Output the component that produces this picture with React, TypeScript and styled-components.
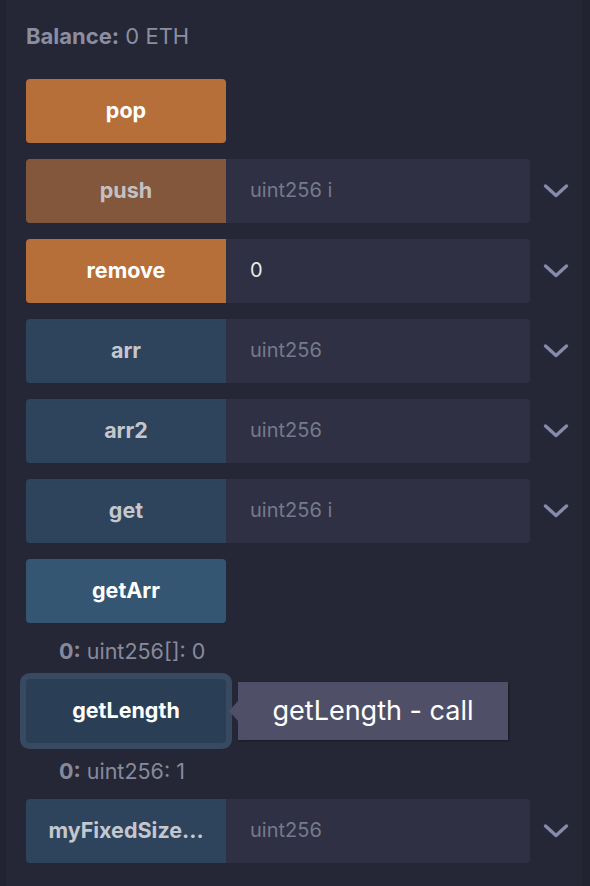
import React from "react";
import styled, { createGlobalStyle } from "styled-components";

const Global = createGlobalStyle`
  html, body { margin: 0; padding: 0; background: #252736; }
  body { font-family: "Inter", "Noto Sans", "Liberation Sans", sans-serif; }
  * { box-sizing: border-box; }
`;

const Shell = styled.div`
  display: flex;
  width: 590px;
  height: 886px;
  overflow: hidden;
  background: #252736;
`;

const SideStrip = styled.div<{ $w: number }>`
  width: ${(p) => p.$w}px;
  flex-shrink: 0;
  background: #212331;
`;

const Panel = styled.div`
  flex: 1;
  padding: 20px 0 0 20px;
  display: flex;
  flex-direction: column;
`;

const Balance = styled.div`
  font-size: 22px;
  color: #8b8ea0;
  height: 32px;
  line-height: 32px;
  margin-bottom: 27px;
  b { font-weight: 700; }
`;

const Row = styled.div`
  position: relative;
  display: flex;
  align-items: center;
  height: 64px;
  margin-bottom: 16px;
`;

const FnButton = styled.div<{ $bg: string; $color: string; $focus?: boolean; $alone?: boolean }>`
  width: 200px;
  height: 64px;
  flex-shrink: 0;
  display: flex;
  align-items: center;
  justify-content: center;
  background: ${(p) => p.$bg};
  color: ${(p) => p.$color};
  font-weight: 700;
  font-size: 21.5px;
  padding-bottom: 2px;
  border-radius: ${(p) => (p.$alone ? "4px" : "4px 0 0 4px")};
  box-shadow: ${(p) => (p.$focus ? "0 0 0 6px #384a62" : "none")};
  white-space: nowrap;
  overflow: hidden;
`;

const Input = styled.div<{ $filled?: boolean }>`
  width: 304px;
  height: 64px;
  background: #2f3043;
  border-radius: 0 4px 4px 0;
  display: flex;
  align-items: center;
  padding-left: 24px;
  padding-bottom: 2px;
  font-size: 20px;
  color: ${(p) => (p.$filled ? "#e8e9ee" : "#767a8c")};
`;

const Chevron = styled.div`
  width: 52px;
  display: flex;
  justify-content: center;
  align-items: center;
`;

const Output = styled.div`
  font-size: 21.5px;
  color: #878a9c;
  padding-left: 33px;
  margin-top: -16px;
  height: 56px;
  padding-top: 11px;
  line-height: 34px;
  b { font-weight: 700; }
`;

const Tooltip = styled.div`
  position: absolute;
  left: 212px;
  top: 3px;
  width: 270px;
  height: 58px;
  background: #4f5068;
  color: #ffffff;
  font-family: "Inter", "Liberation Sans", sans-serif;
  font-size: 27px;
  padding-bottom: 2px;
  display: flex;
  align-items: center;
  justify-content: center;
  box-shadow: 1px 1px 2px rgba(0, 0, 0, 0.35);
  &::before {
    content: "";
    position: absolute;
    left: -9px;
    top: 50%;
    margin-top: -10px;
    border-style: solid;
    border-width: 10px 9px 10px 0;
    border-color: transparent #4f5068 transparent transparent;
  }
`;

const ChevronIcon = () => (
  <svg width="26" height="16" viewBox="0 0 26 16">
    <path d="M2.5 3 L13 12.5 L23.5 3" fill="none" stroke="#868bab" strokeWidth="3.4" strokeLinecap="round" strokeLinejoin="round" />
  </svg>
);

const ORANGE = "#b76f3a";
const ORANGE_DIM = "#83573c";
const BLUE = "#2e435c";

type Fn = { name: string; bg: string; color: string; input?: string; filled?: boolean };

const inputRows: Fn[] = [
  { name: "push", bg: ORANGE_DIM, color: "#c3c1c3", input: "uint256 i" },
  { name: "remove", bg: ORANGE, color: "#ffffff", input: "0", filled: true },
  { name: "arr", bg: BLUE, color: "#c4c7ce", input: "uint256" },
  { name: "arr2", bg: BLUE, color: "#c4c7ce", input: "uint256" },
  { name: "get", bg: BLUE, color: "#c4c7ce", input: "uint256 i" },
];

const InputRow = ({ f }: { f: Fn }) => (
  <Row>
    <FnButton $bg={f.bg} $color={f.color}>{f.name}</FnButton>
    <Input $filled={f.filled}>{f.input}</Input>
    <Chevron><ChevronIcon /></Chevron>
  </Row>
);

export default function App() {
  return (
    <>
      <Global />
      <Shell>
        <SideStrip $w={6} />
        <Panel>
          <Balance><b>Balance:</b> 0 ETH</Balance>
          <Row>
            <FnButton $bg={ORANGE} $color="#ffffff" $alone>pop</FnButton>
          </Row>
          {inputRows.map((f) => (
            <InputRow key={f.name} f={f} />
          ))}
          <Row>
            <FnButton $bg="#355673" $color="#ffffff" $alone>getArr</FnButton>
          </Row>
          <Output><b>0:</b> uint256[]: 0</Output>
          <Row>
            <FnButton $bg="#2a3f55" $color="#ffffff" $alone $focus>getLength</FnButton>
            <Tooltip>getLength - call</Tooltip>
          </Row>
          <Output><b>0:</b> uint256: 1</Output>
          <InputRow f={{ name: "myFixedSize...", bg: BLUE, color: "#c4c7ce", input: "uint256" }} />
        </Panel>
        <SideStrip $w={8} />
      </Shell>
    </>
  );
}
